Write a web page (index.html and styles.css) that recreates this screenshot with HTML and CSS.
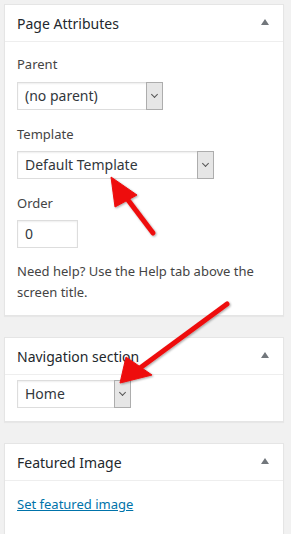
FILE: index.html
```html
<!DOCTYPE html>
<html lang="en">
<head>
  <meta charset="UTF-8">
  <meta name="viewport" content="width=device-width, initial-scale=1.0">
  <title>Page Attributes</title>
  <link rel="stylesheet" href="styles.css">
</head>
<body>
  <div class="postbox">
    <div class="hndle">
      <h2>Page Attributes</h2>
      <span class="toggle"></span>
    </div>
    <div class="inside">
      <p class="label first">Parent</p>
      <div class="select w-parent"><span>(no parent)</span><b class="btn"><i></i></b></div>
      <p class="label">Template</p>
      <div class="select w-template"><span>Default Template</span><b class="btn"><i></i></b></div>
      <p class="label">Order</p>
      <div class="field">0</div>
      <p class="help">Need help? Use the Help tab above the screen title.</p>
    </div>
  </div>

  <div class="postbox">
    <div class="hndle">
      <h2>Navigation section</h2>
      <span class="toggle"></span>
    </div>
    <div class="inside compact">
      <div class="select w-nav"><span>Home</span><b class="btn"><i></i></b></div>
    </div>
  </div>

  <div class="postbox last">
    <div class="hndle">
      <h2>Featured Image</h2>
      <span class="toggle"></span>
    </div>
    <div class="inside">
      <a class="link" href="#">Set featured image</a>
    </div>
  </div>

  <!-- annotation arrows drawn over the screenshot -->
  <svg class="arrows" width="291" height="534" viewBox="0 0 291 534">
    <defs>
      <filter id="shadow" x="-20%" y="-20%" width="140%" height="140%">
        <feDropShadow dx="1" dy="1" stdDeviation="1.2" flood-color="#000" flood-opacity="0.35"/>
      </filter>
    </defs>
    <g fill="#ee1111" stroke="#ee1111" filter="url(#shadow)">
      <line x1="153" y1="233" x2="125" y2="196" stroke-width="5" stroke-linecap="round"/>
      <polygon points="111,177 137,195 115,207" stroke-width="1"/>
      <line x1="227" y1="304" x2="140" y2="368" stroke-width="5" stroke-linecap="round"/>
      <polygon points="120,383 126,357 152,375" stroke-width="1"/>
    </g>
  </svg>
</body>
</html>
```

FILE: styles.css
```css
body {
  margin: 0;
  padding: 4px 7px 0 4px;
  background: #f1f1f1;
  color: #444;
  font-family: "Noto Sans", "Open Sans", sans-serif;
  font-size: 13px;
  line-height: 19px;
  overflow: hidden;
}
.postbox {
  background: #fff;
  border: 1px solid #e5e5e5;
  box-shadow: 0 1px 1px rgba(0, 0, 0, 0.04);
  margin-bottom: 21px;
}
.postbox.last {
  height: 200px;
}
.hndle {
  display: flex;
  align-items: center;
  justify-content: space-between;
  height: 36px;
  padding: 0 14px 0 12px;
  border-bottom: 1px solid #eee;
}
.hndle h2 {
  margin: 0;
  font-size: 14px;
  font-weight: 400;
  color: #23282d;
  line-height: 19px;
}
.toggle {
  width: 0;
  height: 0;
  border-left: 4.5px solid transparent;
  border-right: 4.5px solid transparent;
  border-bottom: 6px solid #72777c;
  margin-top: -2px;
}
.inside {
  padding: 0 12px 12px;
}
.inside.compact {
  padding-top: 5px;
  padding-bottom: 13px;
}
.label {
  margin: 15px 0 7px;
}
.label.first {
  margin-top: 13px;
  margin-bottom: 8px;
}
.select {
  display: flex;
  align-items: stretch;
  height: 26px;
  border: 1px solid #ddd;
  box-shadow: inset 0 1px 2px rgba(0, 0, 0, 0.07);
  font-size: 14px;
  color: #32373c;
  box-sizing: content-box;
}
.select span {
  flex: 1;
  padding: 0 7px;
  line-height: 26px;
}
.select .btn {
  width: 15px;
  background: #e6e6e6;
  border: 1px solid #adadad;
  margin: -1px -1px -1px 0;
  display: flex;
  align-items: center;
  justify-content: center;
}
.select .btn i {
  width: 4px;
  height: 4px;
  border-right: 1px solid #555;
  border-bottom: 1px solid #555;
  transform: rotate(45deg);
  margin-top: -3px;
}
.w-parent { width: 144px; }
.w-template { width: 195px; }
.w-nav { width: 112px; }
.field {
  width: 45px;
  height: 26px;
  padding: 0 7px;
  border: 1px solid #ddd;
  box-shadow: inset 0 1px 2px rgba(0, 0, 0, 0.07);
  font-size: 14px;
  line-height: 26px;
  color: #32373c;
  box-sizing: content-box;
}
.help {
  margin: 13px 0 0;
  line-height: 21px;
}
.link {
  display: inline-block;
  margin-top: 14px;
  color: #0073aa;
  text-decoration: underline;
}
.arrows {
  position: absolute;
  top: 0;
  left: 0;
  pointer-events: none;
}
```
